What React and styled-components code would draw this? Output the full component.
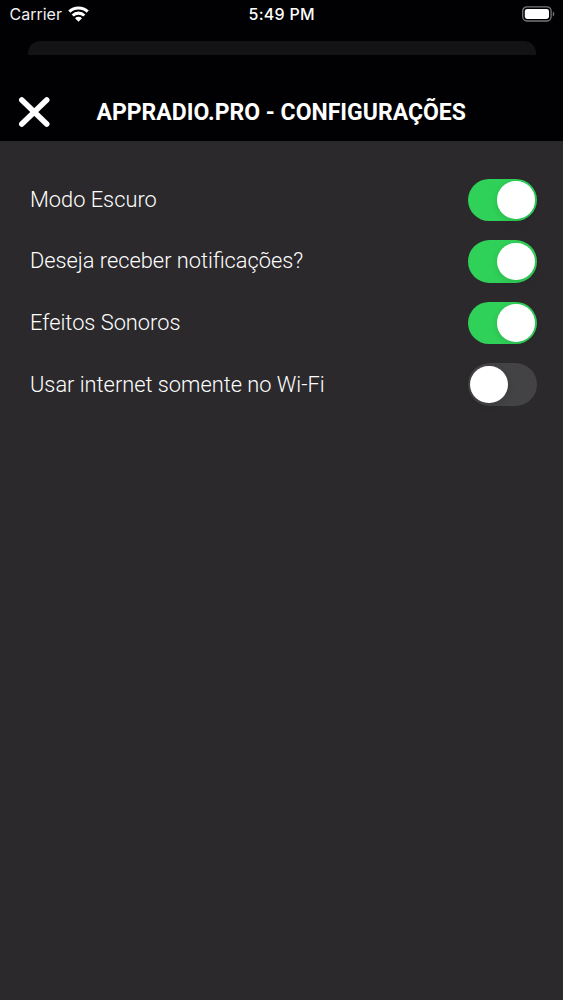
import React, { useState } from "react";
import styled, { createGlobalStyle } from "styled-components";

const GlobalStyle = createGlobalStyle`
  * {
    box-sizing: border-box;
  }

  body {
    margin: 0;
    background: #010002;
  }
`;

const Screen = styled.div`
  display: flex;
  flex-direction: column;
  width: 100%;
  height: 100vh;
  overflow: hidden;
  background: #010002;
  color: #ffffff;
  font-family: Roboto, "Liberation Sans", sans-serif;
`;

const StatusBar = styled.div`
  display: grid;
  grid-template-columns: 1fr auto 1fr;
  align-items: center;
  height: 28px;
  padding: 0 8px 0 9.5px;
  font-family: Inter, "Liberation Sans", sans-serif;
  font-size: 16px;
`;

const Carrier = styled.div`
  display: flex;
  align-items: center;
  gap: 6.5px;
  color: #f0f0f0;
`;

const Clock = styled.div`
  margin-left: -1px;
  font-weight: 500;
  letter-spacing: 0.3px;
`;

const BatteryIcon = styled.svg`
  justify-self: end;
`;

/* top edge of the screen that sits behind the modal */
const BackCard = styled.div`
  height: 14px;
  margin: 13px 27px 0 28px;
  border-radius: 12px 12px 0 0;
  background: #131214;
`;

const Header = styled.header`
  display: flex;
  align-items: center;
  height: 86px;
  padding: 27px 18px 0;
`;

const CloseButton = styled.button`
  display: flex;
  padding: 0;
  border: 0;
  background: none;
  color: inherit;
`;

const Title = styled.h1`
  margin: 1px 0 0 46.5px;
  font-size: 23px;
  font-weight: 700;
  line-height: 31px;
  white-space: nowrap;
`;

const Settings = styled.main`
  flex: 1;
  padding: 28px 26px 0 30px;
  background: #2b292c;
`;

const Row = styled.div`
  display: flex;
  justify-content: space-between;
  align-items: center;
  height: 61.6px;
`;

const Label = styled.span`
  font-size: 21.8px;
  font-weight: 300;
  line-height: 30px;
  white-space: nowrap;
`;

const Toggle = styled.button`
  display: flex;
  align-items: center;
  justify-content: ${({ $on }) => ($on ? "flex-end" : "flex-start")};
  width: 69.5px;
  height: 42.5px;
  padding: 0 2.5px;
  border: 0;
  border-radius: 22px;
  background: ${({ $on }) => ($on ? "#30d158" : "#434245")};
`;

const Knob = styled.span`
  width: 37.5px;
  height: 37.5px;
  border-radius: 50%;
  background: #ffffff;
  box-shadow: 0 2px 7px rgba(0, 0, 0, 0.12);
`;

const options = [
  { id: "dark", label: "Modo Escuro", on: true },
  { id: "notifications", label: "Deseja receber notificações?", on: true },
  { id: "sounds", label: "Efeitos Sonoros", on: true },
  { id: "wifi", label: "Usar internet somente no Wi-Fi", on: false },
];

const SettingRow = ({ label, on }) => {
  const [checked, setChecked] = useState(on);

  return (
    <Row>
      <Label>{label}</Label>
      <Toggle
        $on={checked}
        role="switch"
        aria-checked={checked}
        aria-label={label}
        onClick={() => setChecked(!checked)}
      >
        <Knob />
      </Toggle>
    </Row>
  );
};

const App = () => {
  return (
    <Screen>
      <GlobalStyle />
      <StatusBar>
        <Carrier>
          Carrier
          <svg width="21" height="16" viewBox="0 0 21 16" fill="none" stroke="#fff" strokeWidth="3.1">
            <path d="M1.3 5.7a13.1 13.1 0 0 1 18.4 0" />
            <path d="M4.7 9.5a8.3 8.3 0 0 1 11.6 0" />
            <path d="M10.5 15.8 7 12.3a5 5 0 0 1 7 0z" fill="#fff" stroke="none" />
          </svg>
        </Carrier>
        <Clock>5:49 PM</Clock>
        <BatteryIcon width="33" height="16" viewBox="0 0 33 16">
          <rect x="0.7" y="0.8" width="28.4" height="14.2" rx="4.2" fill="none" stroke="#77767a" strokeWidth="1.3" />
          <rect x="2.8" y="2.9" width="24.2" height="10" rx="2.3" fill="#fff" />
          <path d="M30.8 5.4c2 .8 2 4.2 0 5z" fill="#77767a" />
        </BatteryIcon>
      </StatusBar>
      <BackCard />
      <Header>
        <CloseButton aria-label="Fechar">
          <svg width="32" height="32" viewBox="0 0 32 32" stroke="currentColor" strokeWidth="5.6" strokeLinecap="round">
            <path d="M3.8 4 28.7 28.1M28.7 4 3.8 28.1" />
          </svg>
        </CloseButton>
        <Title>APPRADIO.PRO - CONFIGURAÇÕES</Title>
      </Header>
      <Settings>
        {options.map((option) => (
          <SettingRow key={option.id} label={option.label} on={option.on} />
        ))}
      </Settings>
    </Screen>
  );
};

export default App;
